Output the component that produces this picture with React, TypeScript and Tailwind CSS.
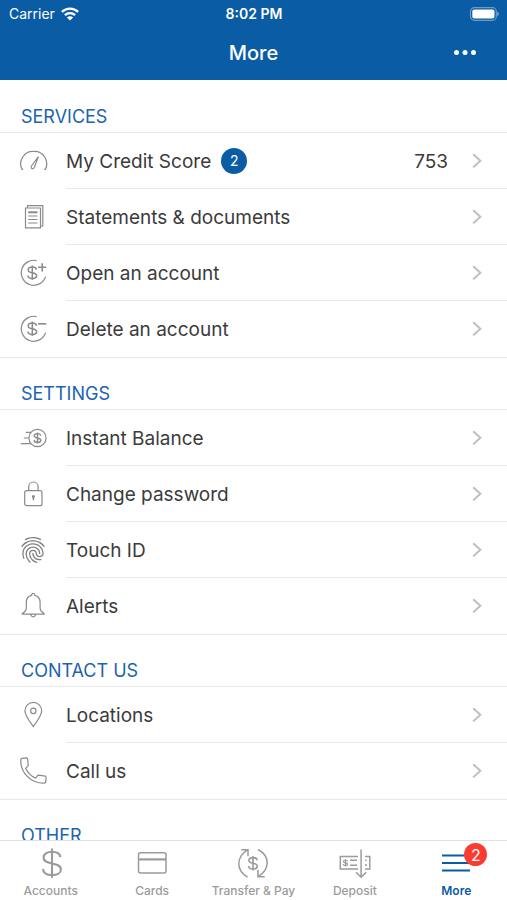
import type { ReactNode } from "react";
import { MdFingerprint } from "react-icons/md";

function Icon({ children }: { children: ReactNode }) {
  return (
    <svg
      viewBox="0 0 28 28"
      className="h-7 w-7 shrink-0 text-[#8a8a8a]"
      fill="none"
      stroke="currentColor"
      strokeWidth="1.2"
      aria-hidden="true"
    >
      {children}
    </svg>
  );
}

function TabIcon({ children }: { children: ReactNode }) {
  return (
    <svg
      viewBox="0 0 32 32"
      className="h-8 w-8 shrink-0"
      fill="none"
      stroke="currentColor"
      strokeWidth="1.5"
      aria-hidden="true"
    >
      {children}
    </svg>
  );
}

/* Dollar mark drawn around its own centre */
function Dollar({ x, y, scale, width }: { x: number; y: number; scale: number; width: number }) {
  return (
    <path
      transform={`translate(${x} ${y}) scale(${scale})`}
      strokeWidth={width / scale}
      d="M0-10V10M5.7-4.1C5.4-6.5 3.2-7.8 0-7.8c-3.4 0-5.7 1.5-5.7 3.9C-5.7-1.200-3.200-.5 0 .1c3.5.7 6 1.400 6 4.100C6 6.600 3.500 8 0 8c-3.500 0-5.900-1.500-6.100-4.200"
    />
  );
}

const openCircle = "M16.500 1.600A12.500 12.500 0 1 0 25.600 17.800";

const icons = {
  gauge: (
    <Icon>
      <path d="M3.200 22.300H2A12.300 12.300 0 0 1 13.700 4.500 12.300 12.300 0 0 1 25.400 22.300H24.200" />
      <path d="M18.400 9.600l-6.600 8.900c-.9 1.300-.8 2.400 0 2.900.9.600 2 .1 2.600-1.200z" />
    </Icon>
  ),
  statement: (
    <Icon>
      <path d="M5.500 5H20.500V24.800H5.500zM7.500 5V2.700H22.800V23H20.500" />
      <path d="M8.200 9.300H17.500" strokeWidth="2" />
      <path d="M8.200 13H17.500M8.200 16.500H17.500M8.200 20H17.500" />
    </Icon>
  ),
  open: (
    <Icon>
      <path d={openCircle} />
      <Dollar x={12.3} y={13.7} scale={0.72} width={1.5} />
      <path d="M18 8.300H26.300M22.200 4.200V12.400" strokeWidth="1.600" />
    </Icon>
  ),
  remove: (
    <Icon>
      <path d={openCircle} />
      <Dollar x={12.3} y={13.7} scale={0.72} width={1.5} />
      <path d="M18 8.800H26.300" strokeWidth="1.600" />
    </Icon>
  ),
  instant: (
    <Icon>
      <circle cx="17.500" cy="14" r="8.600" />
      <path d="M5.800 8.300H11M3.800 14H8.900M.8 19.700H11" />
      <Dollar x={17.5} y={14} scale={0.56} width={1.4} />
    </Icon>
  ),
  lock: (
    <Icon>
      <rect x="4.700" y="10.700" width="17.300" height="15" rx="2" />
      <path d="M8.700 10.700V6.700a4.700 4.700 0 0 1 9.400 0V10.700" />
      <path d="M13.400 16.500V20.300" strokeWidth="1.500" />
      <circle cx="13.400" cy="16.500" r="1.500" fill="currentColor" stroke="none" />
    </Icon>
  ),
  touch: <MdFingerprint className="h-[26px] w-[26px] shrink-0 text-[#7f7f7f]" viewBox="2 2 20 20" aria-hidden="true" />,
  bell: (
    <Icon>
      <path d="M11.600 3.300c0-1.300.6-2 1.600-2s1.600.7 1.600 2c3.500.8 5.300 3.500 5.300 7.200v5.600c0 2.600 1.400 3.900 4 5.500v.6H2.300v-.6c2.600-1.600 4-2.900 4-5.500v-5.600c0-3.700 1.800-6.400 5.300-7.200zM10.800 22.300c.2 1.600 1.100 2.500 2.400 2.500s2.200-.9 2.400-2.500" />
    </Icon>
  ),
  pin: (
    <Icon>
      <path d="M13.300 25.600C10 20.900 4.900 14.700 4.900 9.800a8.400 8.400 0 0 1 16.800 0c0 4.900-5.100 11.100-8.400 15.800z" />
      <circle cx="13.300" cy="9.900" r="2.700" />
    </Icon>
  ),
  phone: (
    <Icon>
      <path
        d="M.8 2.600L1.600 1.400 6.800.9 7.600 1.600 8.200 8.600 5.600 11.300c2 4.500 5.200 7.600 9.800 9.800l2.700-2.900 7.400 1 .6.800-.5 5.400-1 .7C11.500 26.600 0 16 .8 2.600z"
        strokeLinejoin="round"
      />
    </Icon>
  ),
};

type Item = { label: string; icon: ReactNode; badge?: number; value?: string };

const sections: { title: string; items: Item[] }[] = [
  {
    title: "SERVICES",
    items: [
      { label: "My Credit Score", icon: icons.gauge, badge: 2, value: "753" },
      { label: "Statements & documents", icon: icons.statement },
      { label: "Open an account", icon: icons.open },
      { label: "Delete an account", icon: icons.remove },
    ],
  },
  {
    title: "SETTINGS",
    items: [
      { label: "Instant Balance", icon: icons.instant },
      { label: "Change password", icon: icons.lock },
      { label: "Touch ID", icon: icons.touch },
      { label: "Alerts", icon: icons.bell },
    ],
  },
  {
    title: "CONTACT US",
    items: [
      { label: "Locations", icon: icons.pin },
      { label: "Call us", icon: icons.phone },
    ],
  },
  { title: "OTHER", items: [] },
];

function Row({ item, last }: { item: Item; last: boolean }) {
  return (
    <li>
      <a href="#" className="flex h-14 items-stretch pl-5">
        <span className="flex w-[46px] shrink-0 items-center">{item.icon}</span>
        <span
          className={`flex min-w-0 flex-1 items-center border-b pr-[25px] ${last ? "border-transparent" : "border-[#e9e9e9]"}`}
        >
          <span className="pt-0.5 text-[19px] leading-6 text-[#3b3b3b]">{item.label}</span>
          {item.badge !== undefined && (
            <span className="ml-2.5 flex h-[26px] w-[26px] items-center justify-center rounded-full bg-[#0a5ca5] text-sm text-white">
              {item.badge}
            </span>
          )}
          <span className="ml-auto pt-0.5 pr-6 text-[19px] leading-6 text-[#3b3b3b]">{item.value}</span>
          <svg
            viewBox="0 0 10 16"
            className="h-4 w-[10px] shrink-0"
            fill="none"
            stroke="#bdbdbd"
            strokeWidth="1.900"
            aria-hidden="true"
          >
            <path d="M1.200 1.200L8.400 7.800 1.200 14.400" />
          </svg>
        </span>
      </a>
    </li>
  );
}

const tabs: { label: string; icon: ReactNode; active?: boolean; badge?: number }[] = [
  {
    label: "Accounts",
    icon: (
      <TabIcon>
        <Dollar x={17} y={16.3} scale={1.48} width={2.1} />
      </TabIcon>
    ),
  },
  {
    label: "Cards",
    icon: (
      <TabIcon>
        <rect x="2.500" y="5.800" width="27.500" height="20.200" rx="2" />
        <path d="M2.500 12.400H30" strokeWidth="2.200" />
      </TabIcon>
    ),
  },
  {
    label: "Transfer & Pay",
    icon: (
      <TabIcon>
        <path d="M4.300 2.700H11V9.200M11 2.700C-1.200 10-1.200 23.500 10.500 30M27.700 29.700H21V23M21 29.700C33.200 22.500 33.200 9 21 2.500" />
        <Dollar x={16} y={16.2} scale={0.72} width={1.6} />
      </TabIcon>
    ),
  },
  {
    label: "Deposit",
    icon: (
      <TabIcon>
        <path d="M19 9.500H1.300V22H19M22.100 2.500V30M17 25.200L22.100 30.300 27.200 25.200M26 9.500H30.800V22H26M11 13.200H18M11 18.300H18M27 12.500V14M27 17V19" />
        <Dollar x={6.5} y={15.8} scale={0.36} width={1.2} />
      </TabIcon>
    ),
  },
  {
    label: "More",
    active: true,
    badge: 2,
    icon: (
      <TabIcon>
        <path d="M2 8.500H30M2 16H30M2 23.500H30" strokeWidth="1.900" />
      </TabIcon>
    ),
  },
];

export default function App() {
  return (
    <div className="flex h-dvh flex-col bg-white font-['Inter','Liberation_Sans',sans-serif]">
      <header className="shrink-0 bg-[#0a5ca5] pb-0.5 text-white">
        <div className="grid h-7 grid-cols-3 items-center pr-2 pl-[9px] text-sm">
          <span className="flex items-center gap-1.5">
            Carrier
            <svg
              viewBox="0 0 18 14"
              className="h-[14px] w-[18px]"
              fill="none"
              stroke="white"
              strokeWidth="2.400"
              aria-hidden="true"
            >
              <path d="M.9 4.800C5.500.500 12.500.500 17.100 4.800M3.900 8.100c2.900-2.700 7.300-2.700 10.200 0" />
              <path d="M9 13.400L5.900 10.400c1.700-1.500 4.500-1.500 6.200 0z" fill="white" stroke="none" />
            </svg>
          </span>
          <span className="text-center font-semibold">8:02 PM</span>
          <svg viewBox="0 0 30 14" className="h-[14px] w-[30px] justify-self-end" aria-hidden="true">
            <rect
              x="1.500"
              y=".7"
              width="25.800"
              height="12.600"
              rx="3.800"
              fill="none"
              stroke="white"
              strokeOpacity=".4"
              strokeWidth="1.200"
            />
            <rect x="3.300" y="2.500" width="22.200" height="9" rx="2" fill="white" />
            <path d="M28.300 4.800c2 .6 2 3.800 0 4.400z" fill="white" fillOpacity=".5" />
          </svg>
        </div>
        <div className="grid h-[50px] grid-cols-[1fr_auto_1fr] items-center px-6">
          <h1 className="col-start-2 text-xl font-medium">More</h1>
          <button type="button" aria-label="More options" className="flex h-10 items-center justify-self-end px-1.5">
            <svg viewBox="0 0 24 6" className="h-1.5 w-6" fill="white" aria-hidden="true">
              <circle cx="3.500" cy="2.500" r="2.500" />
              <circle cx="12" cy="2.500" r="2.500" />
              <circle cx="20.500" cy="2.500" r="2.500" />
            </svg>
          </button>
        </div>
      </header>

      <main className="min-h-0 flex-1 overflow-y-auto [scrollbar-width:none]">
        {sections.map((section, index) => (
          <section key={section.title}>
            <h2
              className={`flex h-[53px] items-end border-b border-b-[#e9e9e9] px-[21px] pb-[3px] text-lg leading-6 text-[#1c63b0] ${index > 0 ? "border-t border-t-[#e9e9e9]" : ""}`}
            >
              {section.title}
            </h2>
            <ul>
              {section.items.map((item, i) => (
                <Row key={item.label} item={item} last={i === section.items.length - 1} />
              ))}
            </ul>
          </section>
        ))}
      </main>

      <nav className="grid shrink-0 grid-cols-5 border-t border-[#e2e2e2] bg-white pt-1.5 pb-px">
        {tabs.map((tab) => (
          <a
            key={tab.label}
            href="#"
            aria-current={tab.active ? "page" : undefined}
            className={`flex flex-col items-center gap-1 ${tab.active ? "text-[#0a5ca5]" : "text-[#9b9b9b]"}`}
          >
            <span className="relative">
              {tab.icon}
              {tab.badge !== undefined && (
                <span className="absolute -top-1 left-6 flex h-[23px] w-[23px] items-center justify-center rounded-full bg-[#fb3b30] text-base text-white">
                  {tab.badge}
                </span>
              )}
            </span>
            <span className={`text-xs whitespace-nowrap ${tab.active ? "font-semibold" : "font-medium"}`}>{tab.label}</span>
          </a>
        ))}
      </nav>
    </div>
  );
}
